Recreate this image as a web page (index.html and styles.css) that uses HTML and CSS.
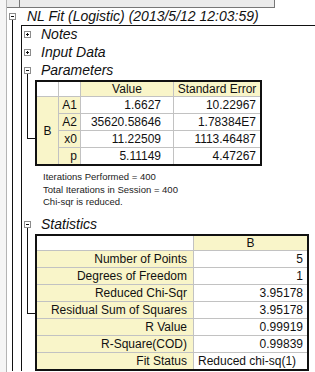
FILE: index.html
```html
<!DOCTYPE html>
<html lang="en">
<head>
    <meta charset="UTF-8">
    <meta name="viewport" content="width=device-width, initial-scale=1.0">
    <title>NL Fit (Logistic) Report</title>
    <link rel="stylesheet" href="styles.css">
</head>
<body>
    <div class="sheet">
        <div class="prev-row"><div class="prev-cell"></div></div>

        <div class="node">
            <div class="rail">
                <span class="toggle minus"></span>
                <div class="stem"></div>
            </div>
            <div class="branch">
                <div class="top-title">NL Fit (Logistic) (2013/5/12 12:03:59)</div>
                <div class="frame">
                    <div class="leaf"><span class="toggle plus"></span><span class="title">Notes</span></div>
                    <div class="leaf"><span class="toggle plus"></span><span class="title">Input Data</span></div>

                    <div class="sub">
                        <div class="sub-rail">
                            <span class="toggle minus"></span>
                            <div class="elbow params-elbow"></div>
                        </div>
                        <div class="sub-body params-body">
                            <div class="title">Parameters</div>
                            <table class="grid params">
                                <tr class="head">
                                    <td class="blank" style="width:22px"></td>
                                    <td class="blank" style="width:22px"></td>
                                    <td class="label center" style="width:93px">Value</td>
                                    <td class="label center" style="width:86px">Standard Error</td>
                                </tr>
                                <tr>
                                    <td class="label center" rowspan="4">B</td>
                                    <td class="label name">A1</td>
                                    <td class="num value">1.6627</td>
                                    <td class="num">10.22967</td>
                                </tr>
                                <tr>
                                    <td class="label name">A2</td>
                                    <td class="num value">35620.58646</td>
                                    <td class="num">1.78384E7</td>
                                </tr>
                                <tr>
                                    <td class="label name">x0</td>
                                    <td class="num value">11.22509</td>
                                    <td class="num">1113.46487</td>
                                </tr>
                                <tr class="last">
                                    <td class="label name">p</td>
                                    <td class="num value">5.11149</td>
                                    <td class="num">4.47267</td>
                                </tr>
                            </table>
                            <div class="fit-notes">
                                Iterations Performed = 400<br>
                                Total Iterations in Session = 400<br>
                                Chi-sqr is reduced.
                            </div>
                        </div>
                    </div>

                    <div class="sub">
                        <div class="sub-rail">
                            <span class="toggle minus"></span>
                            <div class="elbow stats-elbow"></div>
                        </div>
                        <div class="sub-body">
                            <div class="title">Statistics</div>
                            <table class="grid stats">
                                <tr class="head">
                                    <td class="blank" style="width:157px"></td>
                                    <td class="label center" style="width:113px">B</td>
                                </tr>
                                <tr><td class="label stat">Number of Points</td><td class="num">5</td></tr>
                                <tr><td class="label stat">Degrees of Freedom</td><td class="num">1</td></tr>
                                <tr><td class="label stat">Reduced Chi-Sqr</td><td class="num">3.95178</td></tr>
                                <tr><td class="label stat">Residual Sum of Squares</td><td class="num">3.95178</td></tr>
                                <tr><td class="label stat">R Value</td><td class="num">0.99919</td></tr>
                                <tr><td class="label stat">R-Square(COD)</td><td class="num">0.99839</td></tr>
                                <tr class="last"><td class="label stat">Fit Status</td><td class="text">Reduced chi-sq(1)</td></tr>
                            </table>
                        </div>
                    </div>
                </div>
            </div>
        </div>
    </div>
</body>
</html>
```

FILE: styles.css
```css
/* report sheet */
body {
    margin: 0;
    background: #f5f5f5;
    font-family: "Liberation Sans", Arial, sans-serif;
    color: #111;
}
.sheet {
    margin-left: 6px;
    min-height: 100vh;
    background: #fff;
    border-left: 1px solid #b4b4b4;
}
.prev-row {
    width: 267px;
    height: 7px;
    background: #ebebeb;
    border-right: 1px solid #777;
    border-bottom: 1px solid #777;
}
.prev-cell {
    width: 12px;
    height: 100%;
    border-right: 1px solid #777;
}

/* tree */
.node {
    display: flex;
}
.rail {
    width: 14px;
    display: flex;
    flex-direction: column;
}
.toggle {
    display: block;
    flex: none;
    width: 7px;
    height: 7px;
    box-sizing: border-box;
    border: 1px solid #8c8c8c;
    background: linear-gradient(#111, #111) center / 3px 1px no-repeat, #fff;
}
.toggle.plus {
    background: linear-gradient(#111, #111) center / 3px 1px no-repeat,
                linear-gradient(#111, #111) center / 1px 3px no-repeat, #fff;
}
.rail .toggle {
    margin: 5px 0 0 2px;
}
.stem {
    flex: 1;
    margin-left: 5px;
    border-left: 1px solid #111;
}
.branch {
    flex: 1;
    min-width: 0;
}
.top-title {
    height: 17px;
    line-height: 17px;
    padding-left: 6px;
    font-size: 14px;
    font-style: italic;
    white-space: nowrap;
}
.frame {
    border-top: 1px solid #111;
    border-left: 1px solid #111;
}
.leaf {
    display: flex;
    height: 18px;
}
.leaf .toggle {
    margin: 5px 0 0 2px;
}
.title {
    height: 18px;
    line-height: 17px;
    font-size: 14px;
    font-style: italic;
    white-space: nowrap;
}
.leaf .title {
    margin-left: 10px;
}
.sub {
    display: flex;
}
.sub-rail {
    width: 13px;
    flex: none;
}
.sub-rail .toggle {
    margin: 5px 0 0 2px;
}
.elbow {
    width: 7px;
    margin-left: 5px;
    border-left: 1px solid #111;
    border-bottom: 1px solid #111;
}
.params-elbow {
    height: 64px;
}
.stats-elbow {
    height: 85px;
}
.sub-body {
    flex: 1;
}
.sub-body .title {
    padding-left: 6px;
}
.params-body {
    padding-bottom: 7px;
}

/* tables */
.grid {
    border-collapse: separate;
    border-spacing: 0;
    border: 2px solid #111;
    table-layout: fixed;
    font-size: 12px;
}
.params {
    width: 227px;
}
.stats {
    width: 274px;
}
.grid td {
    box-sizing: border-box;
    padding: 0;
    height: 17px;
    line-height: 16px;
    border-right: 1px solid #c2c2c2;
    border-bottom: 1px solid #c2c2c2;
    white-space: nowrap;
    overflow: hidden;
}
.grid td:last-child {
    border-right: none;
}
.grid .head td {
    height: 15px;
    line-height: 14px;
}
.grid .last td,
.grid td[rowspan] {
    border-bottom: none;
    height: 16px;
}
.label {
    background: #f9f5c9;
}
.blank {
    background: #fff;
}
.center {
    text-align: center;
}
.name {
    text-align: right;
    padding-right: 3px !important;
}
.num {
    text-align: right;
    padding-right: 4px !important;
}
.num.value {
    padding-right: 12px !important;
}
.stat {
    text-align: right;
    padding-right: 6px !important;
}
.text {
    padding-left: 4px !important;
}
.fit-notes {
    margin-top: 5px;
    padding-left: 8px;
    font-size: 9.5px;
    line-height: 12.7px;
    color: #222;
}
```
